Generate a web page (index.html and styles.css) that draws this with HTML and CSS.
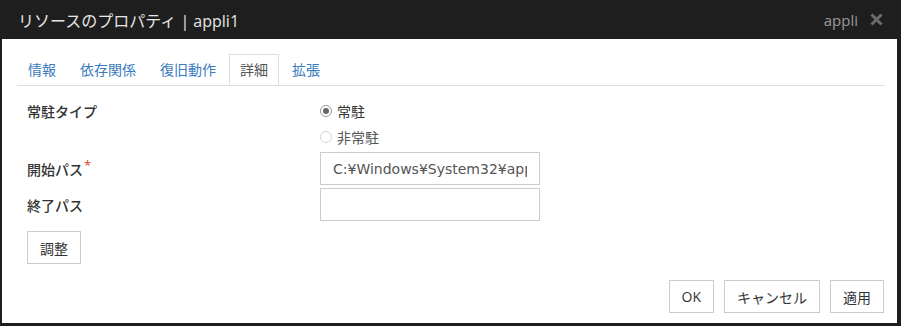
FILE: index.html
```html
<!DOCTYPE html>
<html lang="ja">
<head>
  <meta charset="UTF-8">
  <title>リソースのプロパティ | appli1</title>
  <link rel="stylesheet" href="styles.css">
</head>
<body>
  <div class="dialog">
    <div class="title-bar">
      <span class="title">リソースのプロパティ | appli1</span>
      <span class="title-right">appli
        <svg class="close" width="13" height="13" viewBox="0 0 13 13"><path d="M1.5 1.5 L11.5 11.5 M11.5 1.5 L1.5 11.5" stroke="#6b6b6b" stroke-width="3"/></svg>
      </span>
    </div>
    <div class="content">
      <ul class="tabs">
        <li class="tab">情報</li>
        <li class="tab">依存関係</li>
        <li class="tab">復旧動作</li>
        <li class="tab active">詳細</li>
        <li class="tab">拡張</li>
      </ul>
      <div class="form">
        <div class="label row-a">常駐タイプ</div>
        <div class="value row-a">
          <label class="radio"><input type="radio" name="type" checked> 常駐</label>
        </div>
        <div class="label row-b"></div>
        <div class="value row-b">
          <label class="radio disabled"><input type="radio" name="type" disabled> 非常駐</label>
        </div>
        <div class="label row-c">開始パス<span class="req">*</span></div>
        <div class="value row-c"><input class="text" type="text" value="C:¥Windows¥System32¥appli.exe"></div>
        <div class="label row-d">終了パス</div>
        <div class="value row-d"><input class="text" type="text" value=""></div>
      </div>
      <div class="tune"><button class="btn">調整</button></div>
      <div class="footer">
        <button class="btn">OK</button>
        <button class="btn">キャンセル</button>
        <button class="btn">適用</button>
      </div>
    </div>
  </div>
</body>
</html>
```

FILE: styles.css
```css
html, body {
  margin: 0;
  padding: 0;
  height: 100%;
}
body {
  background: #1e1e1e;
  font-family: "Open Sans", "Noto Sans CJK JP", sans-serif;
  font-size: 14px;
  color: #333;
  overflow: hidden;
}
.dialog {
  width: 901px;
  height: 326px;
  display: flex;
  flex-direction: column;
}
.title-bar {
  height: 39px;
  display: flex;
  align-items: center;
  justify-content: space-between;
  padding: 0 18px 0 18px;
  box-sizing: border-box;
}
.title {
  color: #e6e6e6;
  font-size: 16px;
}
.title-right {
  color: #9a9a9a;
  font-size: 15px;
  display: flex;
  align-items: center;
  gap: 12px;
}
.content {
  flex: 1;
  background: #fff;
  margin: 0 4px 3px 2px;
  padding: 15px 12px 0 15px;
  display: flex;
  flex-direction: column;
}
.tabs {
  list-style: none;
  margin: 0;
  padding: 0;
  display: flex;
  border-bottom: 1px solid #ddd;
  height: 31px;
}
.tab {
  padding: 0 10px;
  margin-right: 2px;
  margin-bottom: -1px;
  line-height: 30px;
  border: 1px solid transparent;
  border-bottom: none;
  color: #3a7bbf;
  font-size: 14px;
}
.tab.active {
  color: #555;
  background: #fff;
  border-color: #ddd;
  height: 31px;
  box-sizing: border-box;
}
.form {
  display: grid;
  grid-template-columns: 293px 220px;
  padding: 12px 0 0 10px;
}
.label {
  font-weight: 500;
  color: #333;
  display: flex;
  align-items: center;
}
.req {
  color: #d9431e;
  font-weight: normal;
  align-self: flex-start;
  margin-left: 1px;
  margin-top: 4px;
  font-size: 13px;
}
.row-a, .row-b {
  height: 26px;
  display: flex;
  align-items: center;
}
.row-c {
  height: 33px;
  margin-top: 2px;
}
.row-d {
  height: 33px;
  margin-top: 3px;
}
.radio {
  display: flex;
  align-items: center;
  gap: 5px;
  color: #333;
}
.radio.disabled {
  color: #555;
}
.radio input {
  appearance: none;
  width: 12px;
  height: 12px;
  margin: 0;
  border: 1px solid #999;
  border-radius: 50%;
  background: #fff;
  position: relative;
}
.radio input:checked::after {
  content: "";
  position: absolute;
  left: 2px;
  top: 2px;
  width: 6px;
  height: 6px;
  border-radius: 50%;
  background: #666;
}
.radio input:disabled {
  border-color: #d6d6d6;
}
.text {
  width: 220px;
  height: 33px;
  box-sizing: border-box;
  border: 1px solid #ccc;
  padding: 0 12px;
  font-family: "DejaVu Sans", "Noto Sans CJK JP", sans-serif;
  font-size: 14px;
  color: #555;
  outline: none;
}
.tune {
  padding: 10px 0 0 10px;
}
.btn {
  height: 33px;
  padding: 0 12px;
  background: #fff;
  border: 1px solid #ccc;
  font-family: "Open Sans", "Noto Sans CJK JP", sans-serif;
  font-size: 14px;
  color: #333;
}
.footer {
  display: flex;
  justify-content: flex-end;
  gap: 10px;
  padding: 16px 1px 0 0;
}
```
